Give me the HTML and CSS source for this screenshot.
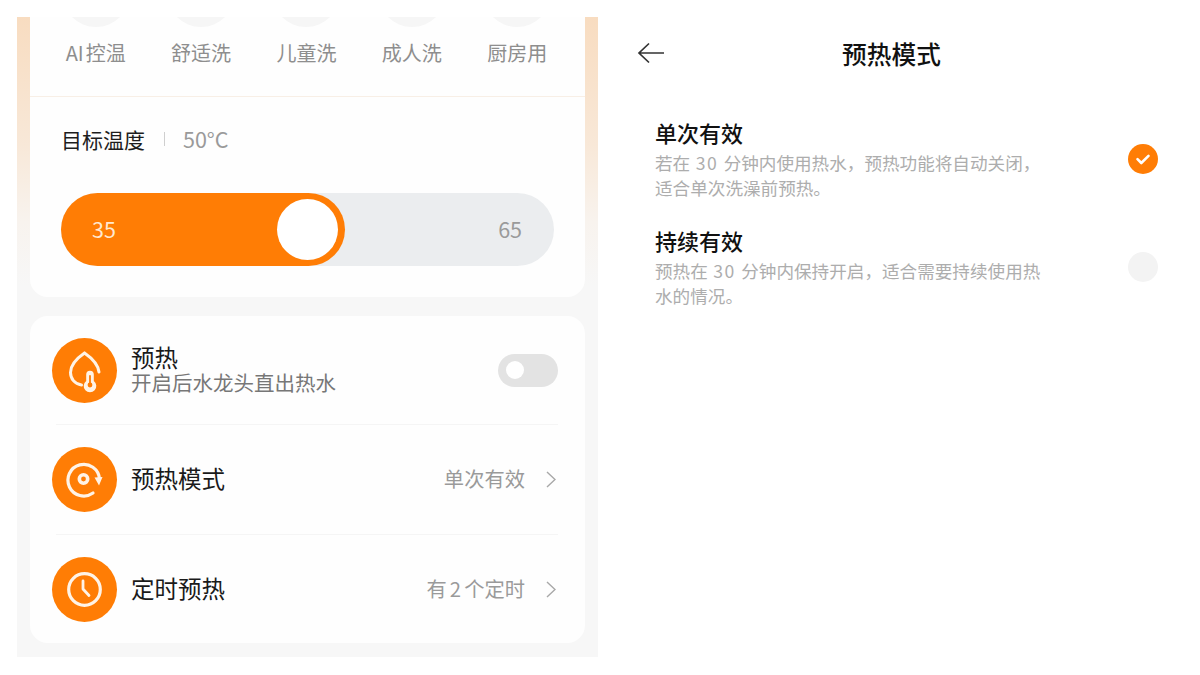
FILE: index.html
```html
<!DOCTYPE html>
<html lang="zh">
<head>
<meta charset="utf-8">
<title>预热模式</title>
<link rel="stylesheet" href="styles.css">
</head>
<body>
<div class="page">
  <section class="phone">
    <div class="card card-top">
      <div class="tabs">
        <div class="tab"><span class="tab-dot"></span><span class="tab-label">AI 控温</span></div>
        <div class="tab"><span class="tab-dot"></span><span class="tab-label">舒适洗</span></div>
        <div class="tab"><span class="tab-dot"></span><span class="tab-label">儿童洗</span></div>
        <div class="tab"><span class="tab-dot"></span><span class="tab-label">成人洗</span></div>
        <div class="tab"><span class="tab-dot"></span><span class="tab-label">厨房用</span></div>
      </div>
      <div class="target">
        <span class="target-name">目标温度</span>
        <span class="target-sep"></span>
        <span class="target-value">50°C</span>
      </div>
      <div class="slider">
        <div class="slider-fill"><span class="slider-min">35</span><span class="slider-knob"></span></div>
        <span class="slider-max">65</span>
      </div>
    </div>
    <div class="card card-list">
      <div class="row row-a">
        <span class="icon">
          <svg width="65" height="65" viewBox="0 0 65 65" fill="none">
            <path d="M29.500 47C22.500 46 18.500 40.500 18.500 34.500C18.500 26.500 26 19.500 32.500 15C39 19.500 46 26 47 34" stroke="#fff3e6" stroke-width="3" stroke-linecap="round"/>
            <path d="M34.200 43V36.500a3.800 3.800 0 0 1 7.600 0V43a6.300 6.300 0 1 1-7.600 0Z" fill="#fff3e6"/>
            <circle cx="38" cy="47" r="2.400" fill="#ff7d05"/>
            <path d="M38 38V46" stroke="#ff7d05" stroke-width="1.800" stroke-linecap="round"/>
          </svg>
        </span>
        <div class="row-text">
          <div class="row-title tight">预热</div>
          <div class="row-sub">开启后水龙头直出热水</div>
        </div>
        <span class="toggle"><span class="toggle-knob"></span></span>
      </div>
      <div class="divider"></div>
      <div class="row row-b">
        <span class="icon">
          <svg width="65" height="65" viewBox="0 0 65 65" fill="none">
            <path d="M41 46A15.800 15.800 0 1 1 47.500 32" stroke="#fff3e6" stroke-width="3.200" stroke-linecap="round"/>
            <path d="M42.500 30.500L50.500 30L47 38.500Z" fill="#fff3e6"/>
            <circle cx="31.500" cy="32" r="4.200" stroke="#fff3e6" stroke-width="3.600"/>
          </svg>
        </span>
        <div class="row-text"><div class="row-title">预热模式</div></div>
        <span class="row-value">单次有效</span>
        <svg class="chev" width="10" height="17" viewBox="0 0 10 17" fill="none"><path d="M1 1L9 8.500L1 16" stroke="#a8a8a8" stroke-width="1.400"/></svg>
      </div>
      <div class="divider"></div>
      <div class="row row-c">
        <span class="icon">
          <svg width="65" height="65" viewBox="0 0 65 65" fill="none">
            <circle cx="32.500" cy="32.500" r="15.800" stroke="#fff3e6" stroke-width="3.200"/>
            <path d="M31 24V32L37 38.500" stroke="#fff3e6" stroke-width="2.800" stroke-linecap="round" stroke-linejoin="round"/>
          </svg>
        </span>
        <div class="row-text"><div class="row-title">定时预热</div></div>
        <span class="row-value">有 2 个定时</span>
        <svg class="chev" width="10" height="17" viewBox="0 0 10 17" fill="none"><path d="M1 1L9 8.500L1 16" stroke="#a8a8a8" stroke-width="1.400"/></svg>
      </div>
    </div>
  </section>

  <section class="detail">
    <header class="detail-head">
      <svg class="back" width="28" height="22" viewBox="0 0 28 22" fill="none"><path d="M27 11H2M12 1.500L2 11L12 20.500" stroke="#333" stroke-width="1.700"/></svg>
      <h1 class="detail-title">预热模式</h1>
    </header>
    <div class="option">
      <div class="option-text">
        <h2 class="option-title">单次有效</h2>
        <p class="option-desc">若在<span class="num"> 30 </span>分钟内使用热水，预热功能将自动关闭，<br>适合单次洗澡前预热。</p>
      </div>
      <span class="radio radio-on">
        <svg width="30" height="30" viewBox="0 0 30 30" fill="none"><path d="M9.500 15.200L13.300 19L20.500 11.800" stroke="#fff" stroke-width="2.600" stroke-linecap="round" stroke-linejoin="round"/></svg>
      </span>
    </div>
    <div class="option">
      <div class="option-text">
        <h2 class="option-title">持续有效</h2>
        <p class="option-desc">预热在<span class="num"> 30 </span>分钟内保持开启，适合需要持续使用热<br>水的情况。</p>
      </div>
      <span class="radio"></span>
    </div>
  </section>
</div>
</body>
</html>
```

FILE: styles.css
```css
* { box-sizing: border-box; }
html, body { margin: 0; padding: 0; background: #fff; }
body {
  width: 1200px;
  height: 675px;
  overflow: hidden;
  font-family: "Noto Sans CJK SC", "Noto Sans", sans-serif;
}
.page { display: flex; padding: 17px 0 0 17px; }

.phone {
  width: 581px;
  height: 640px;
  padding: 0 13px;
  display: flex;
  flex-direction: column;
  gap: 19px;
  overflow: hidden;
  background: linear-gradient(180deg, #f8dcc0 0%, #f8e8d8 20%, #f8f3ee 32%, #f7f7f7 42%);
}
.card { background: #fff; }
.card-top {
  height: 280px;
  flex: none;
  border-radius: 0 0 18px 18px;
  overflow: hidden;
  background: #fefefe;
}
.tabs {
  height: 80px;
  display: flex;
  padding: 0 13px;
  border-bottom: 1px solid #f8efe6;
}
.tab {
  width: 105.4px;
  display: flex;
  flex-direction: column;
  align-items: center;
}
.tab-dot {
  width: 68px;
  height: 68px;
  margin-top: -58px;
  border-radius: 50%;
  background: #f6f6f6;
  flex: none;
}
.tab-label {
  margin-top: 11px;
  font-size: 20px;
  line-height: 30px;
  color: #8e8e8e;
  white-space: nowrap;
  word-spacing: -2.500px;
}
.target {
  display: flex;
  align-items: center;
  height: 30px;
  margin: 27px 0 0 31px;
}
.target-name { font-size: 21px; color: #1d1d1d; line-height: 30px; }
.target-sep { width: 1px; height: 14px; margin: 0 18px 0 19px; background: #cfcfcf; }
.target-value { font-size: 21.500px; color: #9a9a9a; line-height: 30px; }
.slider {
  height: 73px;
  margin: 39px 31px 0;
  border-radius: 37px;
  background: #ebedef;
  display: flex;
  align-items: center;
  justify-content: space-between;
  font-size: 21.500px;
  line-height: 30px;
}
.slider-fill {
  width: 284px;
  height: 73px;
  border-radius: 37px;
  background: #ff7d05;
  display: flex;
  align-items: center;
  justify-content: space-between;
  padding: 0 7px 0 31px;
}
.slider-min { color: #ffe9d2; padding-bottom: 2px; }
.slider-knob { width: 61px; height: 61px; border-radius: 50%; background: #fff; }
.slider-max { color: #9a9a9a; margin-right: 32px; padding-bottom: 2px; }

.card-list {
  height: 327px;
  flex: none;
  border-radius: 18px;
  background: #fefefe;
  display: flex;
  flex-direction: column;
}
.row {
  display: flex;
  align-items: center;
  padding: 0 27px 0 22px;
}
.row-a, .row-c { height: 108px; }
.row-b { height: 109px; }
.divider { height: 1px; margin: 0 27px 0 26px; background: #f5f5f5; flex: none; }
.icon {
  width: 65px;
  height: 65px;
  flex: none;
  border-radius: 50%;
  background: #ff7d05;
  display: block;
}
.icon svg { display: block; }
.row-text { flex: 1; margin-left: 14px; min-width: 0; }
.row-title { font-size: 23.500px; line-height: 32px; color: #1a1a1a; padding-bottom: 3px; }
.row-title.tight { line-height: 25px; padding-bottom: 0; }
.row-sub { font-size: 20.500px; line-height: 25px; color: #777; white-space: nowrap; }
.row-value { font-size: 20.300px; color: #9a9a9a; white-space: nowrap; word-spacing: -1.500px; padding-bottom: 3px; }
.chev { margin-left: 21px; margin-right: 2px; flex: none; }
.toggle {
  width: 60px;
  height: 33px;
  border-radius: 17px;
  background: #e3e3e3;
  display: flex;
  align-items: center;
  padding-left: 8px;
}
.toggle-knob { width: 18px; height: 18px; border-radius: 50%; background: #fff; }

.detail { width: 582px; padding: 0 0 0 39px; }
.detail-head {
  position: relative;
  height: 40px;
  margin-top: 16px;
  display: flex;
  align-items: center;
  justify-content: center;
}
.back { position: absolute; left: 0; top: 9px; }
.detail-title {
  margin: 0 34px 0 0;
  font-size: 24.700px;
  line-height: 40px;
  font-weight: 500;
  color: #111;
}
.option {
  display: flex;
  justify-content: space-between;
  padding: 0 22px 0 18px;
  height: 108px;
}
.detail-head + .option { margin-top: 43px; }
.option-title {
  margin: 0;
  font-size: 22px;
  line-height: 32px;
  font-weight: 500;
  color: #111;
}
.option-desc {
  margin: 2px 0 0;
  font-size: 17.600px;
  line-height: 25px;
  color: #adadad;
  white-space: nowrap;
}
.num { letter-spacing: 1.500px; }
.radio {
  width: 30px;
  height: 30px;
  margin-top: 28px;
  border-radius: 50%;
  background: #f3f3f3;
  flex: none;
}
.radio svg { display: block; }
.radio-on { background: #ff7d05; }
```
